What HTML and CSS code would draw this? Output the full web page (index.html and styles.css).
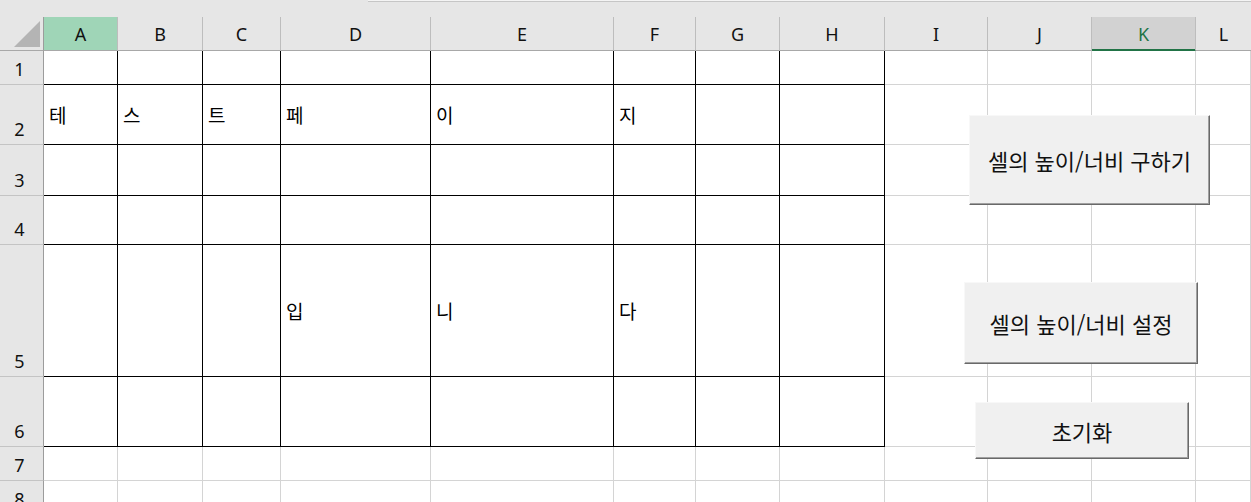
FILE: index.html
```html
<!DOCTYPE html>
<html lang="ko">
<head>
<meta charset="utf-8">
<title>Sheet</title>
<link rel="stylesheet" href="styles.css">
</head>
<body>
<div class="app">
  <div class="topstrip"><div class="fbar"></div></div>
  <div class="sheet">
    <div class="corner"><svg width="44" height="34" viewBox="0 0 44 34"><polygon points="14,30 40,4 40,30" fill="#b4b4b4"/></svg></div>
    <div class="ch sel">A</div><div class="ch">B</div><div class="ch">C</div><div class="ch">D</div><div class="ch">E</div><div class="ch">F</div><div class="ch">G</div><div class="ch">H</div><div class="ch">I</div><div class="ch">J</div><div class="ch act">K</div><div class="ch last">L</div>

    <div class="rh">1</div>
    <div class="c b"></div><div class="c b"></div><div class="c b"></div><div class="c b"></div><div class="c b"></div><div class="c b"></div><div class="c b"></div><div class="c b"></div><div class="c"></div><div class="c"></div><div class="c"></div><div class="c"></div>

    <div class="rh">2</div>
    <div class="c b">테</div><div class="c b">스</div><div class="c b">트</div><div class="c b">페</div><div class="c b">이</div><div class="c b">지</div><div class="c b"></div><div class="c b"></div><div class="c"></div><div class="c"></div><div class="c"></div><div class="c"></div>

    <div class="rh">3</div>
    <div class="c b"></div><div class="c b"></div><div class="c b"></div><div class="c b"></div><div class="c b"></div><div class="c b"></div><div class="c b"></div><div class="c b"></div><div class="c"></div><div class="c"></div><div class="c"></div><div class="c"></div>

    <div class="rh">4</div>
    <div class="c b"></div><div class="c b"></div><div class="c b"></div><div class="c b"></div><div class="c b"></div><div class="c b"></div><div class="c b"></div><div class="c b"></div><div class="c"></div><div class="c"></div><div class="c"></div><div class="c"></div>

    <div class="rh">5</div>
    <div class="c b"></div><div class="c b"></div><div class="c b"></div><div class="c b">입</div><div class="c b">니</div><div class="c b">다</div><div class="c b"></div><div class="c b"></div><div class="c"></div><div class="c"></div><div class="c"></div><div class="c"></div>

    <div class="rh">6</div>
    <div class="c b"></div><div class="c b"></div><div class="c b"></div><div class="c b"></div><div class="c b"></div><div class="c b"></div><div class="c b"></div><div class="c b"></div><div class="c"></div><div class="c"></div><div class="c"></div><div class="c"></div>

    <div class="rh">7</div>
    <div class="c"></div><div class="c"></div><div class="c"></div><div class="c"></div><div class="c"></div><div class="c"></div><div class="c"></div><div class="c"></div><div class="c"></div><div class="c"></div><div class="c"></div><div class="c"></div>

    <div class="rh">8</div>
    <div class="c"></div><div class="c"></div><div class="c"></div><div class="c"></div><div class="c"></div><div class="c"></div><div class="c"></div><div class="c"></div><div class="c"></div><div class="c"></div><div class="c"></div><div class="c"></div>
  </div>

  <button class="btn btn1">셀의 높이/너비 구하기</button>
  <button class="btn btn2">셀의 높이/너비 설정</button>
  <button class="btn btn3">초기화</button>
</div>
</body>
</html>
```

FILE: styles.css
```css
* { box-sizing: border-box; }
html, body {
  margin: 0;
  padding: 0;
  width: 1251px;
  height: 502px;
  overflow: hidden;
  background: #ffffff;
}
.app {
  position: relative;
  width: 1251px;
  height: 502px;
  overflow: hidden;
  font-family: "Noto Sans", "Noto Sans CJK KR", sans-serif;
}
.topstrip {
  height: 17px;
  background: #e6e6e6;
  display: flex;
  justify-content: flex-end;
}
.fbar {
  width: 883px;
  height: 2px;
  background: #f4f4f4;
  border-bottom: 1px solid #c6c6c6;
}
.sheet {
  display: grid;
  grid-template-columns: 44px 74px 85px 78px 150px 183px 82px 84px 105px 103px 104px 104px 1fr;
  grid-template-rows: 34px 34px 60px 51px 49px 132px 70px 34px 34px;
}
.corner {
  background: #e6e6e6;
  border-right: 1px solid #9c9c9c;
  border-bottom: 1px solid #a8a8a8;
}
.corner svg { display: block; }
.ch {
  background: #e6e6e6;
  border-right: 1px solid #bdbdbd;
  border-bottom: 1px solid #a8a8a8;
  display: flex;
  align-items: center;
  justify-content: center;
  font-size: 18px;
  color: #111;
  padding-top: 1px;
}
.ch.last { border-right: none; }
.ch.sel { background: #9fd5b7; }
.ch.act {
  background: #d2d2d2;
  border-bottom: 1px solid #217346;
  box-shadow: inset 0 -1px 0 #217346;
  color: #217346;
}
.rh {
  background: #e6e6e6;
  border-right: 1px solid #9c9c9c;
  border-bottom: 1px solid #c4c4c4;
  display: flex;
  align-items: flex-end;
  justify-content: center;
  font-size: 18px;
  color: #111;
  padding-bottom: 4px;
  padding-right: 4px;
  line-height: 22px;
}
.c {
  border-right: 1px solid #d4d4d4;
  border-bottom: 1px solid #d4d4d4;
  display: flex;
  align-items: center;
  padding-left: 5px;
  font-family: "Noto Sans CJK KR", sans-serif;
  font-size: 19px;
  color: #000;
}
.c.b {
  border-right-color: #000;
  border-bottom-color: #000;
}
.btn {
  position: absolute;
  background: #f0f0f0;
  border: none;
  border-top: 1px solid #f8f8f8;
  border-left: 1px solid #f8f8f8;
  border-right: 1px solid #696969;
  border-bottom: 1px solid #696969;
  box-shadow: inset -1px -1px 0 #a0a0a0;
  font-family: "Noto Sans CJK KR", sans-serif;
  font-size: 22px;
  color: #111;
  padding: 0;
  margin: 0;
  display: flex;
  align-items: center;
  justify-content: center;
}
.btn1 { left: 969px; top: 115px; width: 241px; height: 90px; }
.btn2 { left: 964px; top: 282px; width: 234px; height: 82px; }
.btn3 { left: 975px; top: 402px; width: 214px; height: 57px; }
```
